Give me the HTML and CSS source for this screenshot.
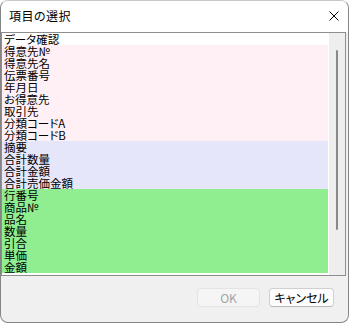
FILE: index.html
```html
<!DOCTYPE html>
<html lang="ja">
<head>
<meta charset="utf-8">
<link rel="stylesheet" href="styles.css">
</head>
<body>
<div class="window">
  <div class="titlebar">
    <span class="title">項目の選択</span>
    <svg class="close" width="10" height="10" viewBox="0 0 10 10"><path d="M0.5 0.5 L9.5 9.5 M9.5 0.5 L0.5 9.5" stroke="#000" stroke-width="1" fill="none"/></svg>
  </div>
  <div class="listbox">
    <div class="items">
      <div class="row">データ確認</div>
      <div class="row pink">得意先№</div>
      <div class="row pink">得意先名</div>
      <div class="row pink">伝票番号</div>
      <div class="row pink">年月日</div>
      <div class="row pink">お得意先</div>
      <div class="row pink">取引先</div>
      <div class="row pink">分類コードA</div>
      <div class="row pink">分類コードB</div>
      <div class="row lav">摘要</div>
      <div class="row lav">合計数量</div>
      <div class="row lav">合計金額</div>
      <div class="row lav">合計売価金額</div>
      <div class="row green">行番号</div>
      <div class="row green">商品№</div>
      <div class="row green">品名</div>
      <div class="row green">数量</div>
      <div class="row green">引合</div>
      <div class="row green">単価</div>
      <div class="row green">金額</div>
    </div>
    <div class="scrollbar"><div class="thumb"></div></div>
  </div>
  <div class="buttons">
    <div class="btn ok">OK</div>
    <div class="btn cancel">キャンセル</div>
  </div>
</div>
</body>
</html>
```
FILE: styles.css
```css
* { box-sizing: border-box; }
html, body { margin: 0; padding: 0; background: #ffffff; }
body { font-family: "Noto Sans CJK JP", "Noto Sans", sans-serif; font-feature-settings: "palt"; }
.window {
  width: 349px;
  height: 323px;
  border: 1px solid #858585;
  border-top-color: #c8c8c8;
  border-radius: 8px;
  background: #f0f0f0;
  overflow: hidden;
  display: flex;
  flex-direction: column;
}
.titlebar {
  height: 31px;
  background: #ffffff;
  display: flex;
  align-items: center;
  justify-content: space-between;
  padding: 0 9px 1px 8px;
}
.title { font-size: 12px; line-height: 14px; color: #000; letter-spacing: 0.5px; }
.close { display: block; }
.listbox {
  width: 345px;
  height: 244px;
  border: 1px solid #8e8e8e;
  background: #ffffff;
  display: flex;
}
.items { width: 327px; display: flex; flex-direction: column; }
.row {
  height: 12px;
  line-height: 12px;
  font-size: 11.5px;
  padding-left: 2px;
  color: #000;
  white-space: nowrap;
}
.pink { background: #fff0f5; }
.lav { background: #e6e6fa; }
.green { background: #90ee90; }
.scrollbar {
  width: 16px;
  margin-left: 1px;
  background: #eeeeee;
  padding: 17px 0 0 7px;
}
.thumb { width: 2px; height: 180px; background: #8a8a8a; border-radius: 1px; }
.buttons {
  display: flex;
  justify-content: flex-end;
  gap: 9px;
  padding: 12px 14px 0 0;
}
.btn {
  height: 19px;
  font-size: 12px;
  line-height: 17px;
  text-align: center;
  border-radius: 4px;
}
.ok { width: 63px; color: #a3a3a3; background: #f5f5f5; border: 1px solid #e3e3e3; }
.cancel { width: 65px; color: #000; background: #fdfdfd; border: 1px solid #d0d0d0; border-bottom-color: #b8b8b8; }
```
